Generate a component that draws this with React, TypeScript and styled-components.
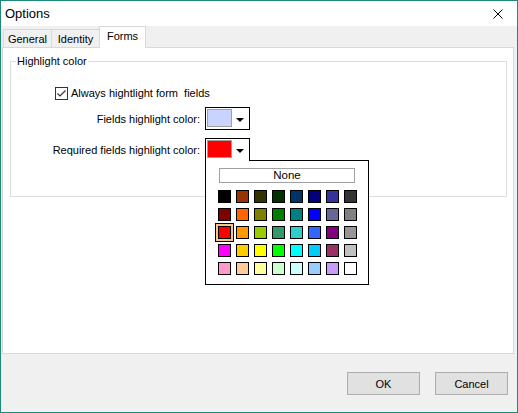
import React from "react";
import styled, { createGlobalStyle } from "styled-components";

const GlobalStyle = createGlobalStyle`
  * { box-sizing: border-box; }
  html, body { margin: 0; padding: 0; background: #ffffff; }
  body {
    font-family: "Liberation Sans", Arial, sans-serif;
    font-size: 11px;
    color: #000;
  }
`;

const palette = [
  ["#000000", "#993300", "#333300", "#003300", "#003366", "#000080", "#333399", "#333333"],
  ["#800000", "#FF6600", "#808000", "#008000", "#008080", "#0000FF", "#666699", "#808080"],
  ["#FF0000", "#FF9900", "#99CC00", "#339966", "#33CCCC", "#3366FF", "#800080", "#969696"],
  ["#FF00FF", "#FFCC00", "#FFFF00", "#00FF00", "#00FFFF", "#00CCFF", "#993366", "#C0C0C0"],
  ["#FF99CC", "#FFCC99", "#FFFF99", "#CCFFCC", "#CCFFFF", "#99CCFF", "#CC99FF", "#FFFFFF"],
];

const Options = () => {
  return (
    <Window>
      <GlobalStyle />
      <TitleBar>
        <Title>Options</Title>
        <CloseButton>
          <svg width="10" height="10" viewBox="0 0 10 10">
            <path d="M0.5 0.5 L9.5 9.5 M9.5 0.5 L0.5 9.5" stroke="#000" strokeWidth="1" fill="none" />
          </svg>
        </CloseButton>
      </TitleBar>

      <Body>
        <TabRow>
          <Tab $width={49}>General</Tab>
          <Tab $width={48} $noLeft>Identity</Tab>
          <Tab $width={47} $active>Forms</Tab>
        </TabRow>

        <TabPage>
          <GroupBox>
            <Legend>Highlight color</Legend>

            <CheckRow>
              <CheckBox>
                <svg width="11" height="11" viewBox="0 0 11 11">
                  <path d="M1.5 5.5 L4 8 L9.5 2.5" stroke="#333" strokeWidth="1.2" fill="none" />
                </svg>
              </CheckBox>
              <span>Always hightlight form&nbsp; fields</span>
            </CheckRow>

            <FieldRow>
              <FieldLabel>Fields highlight color:</FieldLabel>
              <ComboWrap>
                <Combo>
                  <Swatch $color="#c8d4ff" />
                  <ArrowBox><Arrow /></ArrowBox>
                </Combo>
              </ComboWrap>
            </FieldRow>

            <FieldRow>
              <FieldLabel>Required fields highlight color:</FieldLabel>
              <ComboWrap>
                <Combo>
                  <Swatch $color="#ff0000" />
                  <ArrowBox><Arrow /></ArrowBox>
                </Combo>
                <Popup>
                  <NoneButton>None</NoneButton>
                  <ColorGrid>
                    {palette.map((row, r) =>
                      row.map((c, i) => (
                        <ColorCell key={r + "-" + i} $color={c} $selected={r === 2 && i === 0} />
                      ))
                    )}
                  </ColorGrid>
                </Popup>
              </ComboWrap>
            </FieldRow>
          </GroupBox>
        </TabPage>

        <Footer>
          <Button>OK</Button>
          <Button>Cancel</Button>
        </Footer>
      </Body>
    </Window>
  );
};

export default function App() {
  return <Options />;
}

// Styled Components

const Window = styled.div`
  width: 518px;
  height: 413px;
  border: 1px solid #1b8a77;
  display: flex;
  flex-direction: column;
  background: #f0f0f0;
`;

const TitleBar = styled.div`
  height: 25px;
  background: #ffffff;
  display: flex;
  align-items: center;
  justify-content: space-between;
  padding: 0 14px 0 4px;
`;

const Title = styled.div`
  font-size: 13px;
`;

const CloseButton = styled.div`
  width: 10px;
  height: 10px;
  display: flex;
  svg { display: block; }
`;

const Body = styled.div`
  flex: 1;
  display: flex;
  flex-direction: column;
`;

const TabRow = styled.div`
  height: 21px;
  display: flex;
  align-items: flex-end;
  padding-left: 2px;
`;

const Tab = styled.div<{ $width: number; $active?: boolean; $noLeft?: boolean }>`
  width: ${(p) => p.$width}px;
  height: ${(p) => (p.$active ? 22 : 18)}px;
  border: 1px solid #d9d9d9;
  border-bottom: none;
  border-left-width: ${(p) => (p.$noLeft ? 0 : 1)}px;
  margin-left: ${(p) => (p.$active ? -1 : 0)}px;
  margin-bottom: ${(p) => (p.$active ? -1 : 0)}px;
  background: ${(p) => (p.$active ? "#ffffff" : "#f0f0f0")};
  position: relative;
  z-index: ${(p) => (p.$active ? 2 : 0)};
  display: flex;
  justify-content: center;
  padding-top: 2px;
  line-height: 14px;
`;

const TabPage = styled.div`
  flex: 1;
  margin: 0 3px 0 1px;
  background: #ffffff;
  border: 1px solid #d9d9d9;
  padding: 6px 6px 0 7px;
`;

const GroupBox = styled.fieldset`
  margin: 0;
  padding: 0;
  height: 143px;
  border: 1px solid #dcdcdc;
`;

const Legend = styled.legend`
  margin-left: 5px;
  padding: 0 1px;
  line-height: 14px;
`;

const CheckRow = styled.div`
  display: flex;
  align-items: center;
  gap: 3px;
  margin: 17px 0 0 44px;
  height: 16px;
`;

const CheckBox = styled.div`
  width: 13px;
  height: 13px;
  border: 1px solid #333333;
  background: #ffffff;
  display: flex;
  align-items: center;
  justify-content: center;
  svg { display: block; }
`;

const FieldRow = styled.div`
  display: flex;
  align-items: center;
  margin-top: 6px;
  & + & { margin-top: 8px; }
`;

const FieldLabel = styled.div`
  width: 189px;
  text-align: right;
  margin-right: 5px;
  white-space: nowrap;
`;

const ComboWrap = styled.div`
  position: relative;
`;

const Combo = styled.div`
  width: 45px;
  height: 23px;
  border: 1px solid #000000;
  background: #ffffff;
  display: flex;
  padding: 1px;
`;

const Swatch = styled.div<{ $color: string }>`
  width: 25px;
  height: 18px;
  border: 1px solid #a0a0a0;
  background: ${(p) => p.$color};
`;

const ArrowBox = styled.div`
  flex: 1;
  display: flex;
  align-items: center;
  justify-content: center;
  padding-top: 3px;
`;

const Arrow = styled.div`
  width: 0;
  height: 0;
  border-left: 4px solid transparent;
  border-right: 4px solid transparent;
  border-top: 4px solid #000;
`;

const Popup = styled.div`
  position: absolute;
  top: 22px;
  left: 0;
  width: 164px;
  height: 125px;
  background: #ffffff;
  border: 1px solid #000000;
  z-index: 5;
  padding: 7px 0 0 12px;

  &::before {
    content: "";
    position: absolute;
    top: -1px;
    left: 0;
    width: 43px;
    height: 1px;
    background: #ffffff;
  }
`;

const NoneButton = styled.div`
  width: 136px;
  height: 15px;
  margin-left: 1px;
  border: 1px solid #a0a0a0;
  background: #ffffff;
  display: flex;
  align-items: center;
  justify-content: center;
  line-height: 13px;
  font-size: 11.5px;
`;

const ColorGrid = styled.div`
  display: grid;
  grid-template-columns: repeat(8, 13px);
  grid-auto-rows: 13px;
  column-gap: 5px;
  row-gap: 5px;
  margin-top: 7px;
`;

const ColorCell = styled.div<{ $color: string; $selected?: boolean }>`
  width: 13px;
  height: 13px;
  border: 1px solid #000000;
  background: ${(p) => p.$color};
  box-shadow: ${(p) => (p.$selected ? "0 0 0 2px #fbc68a, 0 0 0 3px #000000" : "none")};
`;

const Footer = styled.div`
  height: 58px;
  display: flex;
  justify-content: flex-end;
  gap: 15px;
  padding: 18px 9px 0 0;
`;

const Button = styled.div`
  width: 73px;
  height: 23px;
  border: 1px solid #adadad;
  background: #e1e1e1;
  display: flex;
  align-items: center;
  justify-content: center;
`;
